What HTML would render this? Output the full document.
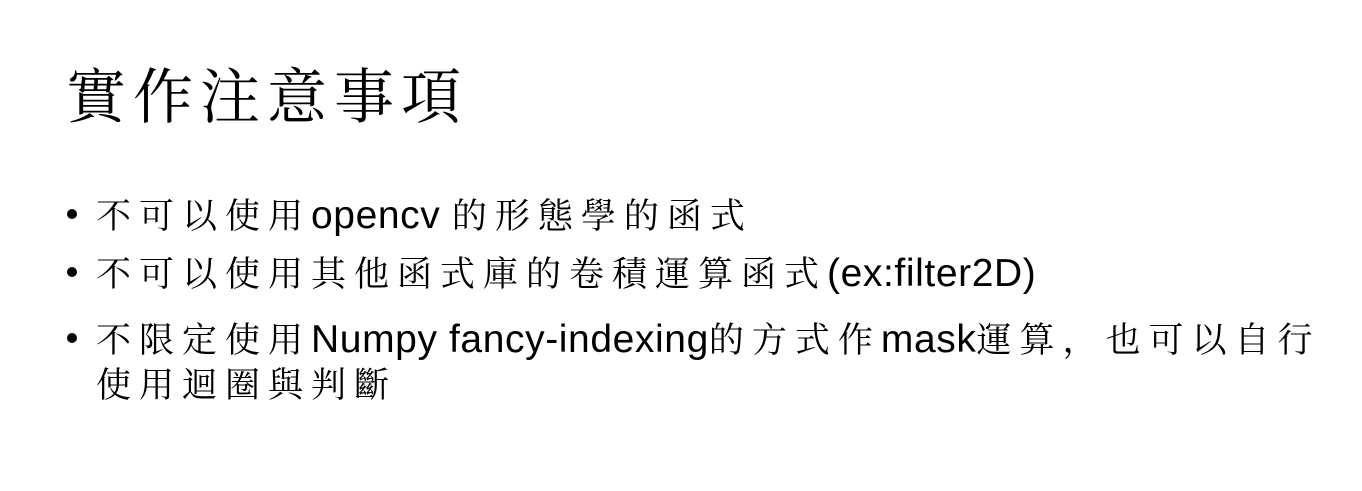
<!DOCTYPE html>
<html><head><meta charset="utf-8"><style>
body{margin:0;width:1362px;height:491px;background:#fff;overflow:hidden;position:relative;color:#000}
.t{position:absolute;left:66px;top:57px;font-family:"Noto Serif CJK SC","Noto Serif CJK TC",serif;font-size:60px;letter-spacing:7px;line-height:72px;white-space:nowrap}
.l{position:absolute;left:96px;height:44px;line-height:44px;white-space:nowrap;font-family:"Noto Serif CJK SC",serif;font-size:35px;letter-spacing:8px}
.e{font-family:"Liberation Sans",sans-serif;font-size:39px;letter-spacing:0.6px}
.b{position:absolute;left:67px;width:10px;height:10px;border-radius:50%;background:#000}
</style></head><body>
<div class="t">實作注意事項</div>
<div class="b" style="top:209px"></div>
<div class="l" style="top:192px">不可以使用<span class="e">opencv </span>的形態學的函式</div>
<div class="b" style="top:267px"></div>
<div class="l" style="top:250px">不可以使用其他函式庫的卷積運算函式<span class="e">(ex:filter2D)</span></div>
<div class="b" style="top:333px"></div>
<div class="l" style="top:316px">不限定使用<span class="e">Numpy fancy-indexing</span>的方式作<span class="e">mask</span>運算，也可以自行</div>
<div class="l" style="top:361px">使用迴圈與判斷</div>
</body></html>
